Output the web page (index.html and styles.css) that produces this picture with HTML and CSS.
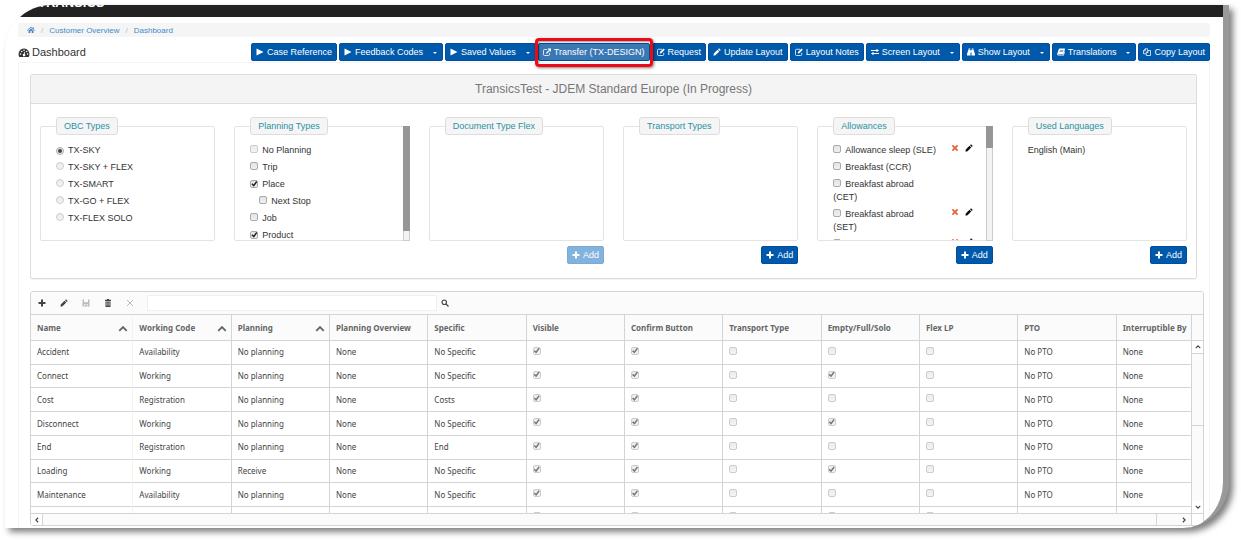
FILE: index.html
```
<!DOCTYPE html>
<html lang="en">
<head>
    <meta charset="UTF-8">
    <meta name="viewport" content="width=device-width, initial-scale=1.0">
    <title>Dashboard</title>
    <link rel="stylesheet" href="styles.css">
</head>
<body>
    <svg class="sprite" aria-hidden="true">
        <symbol id="i-home" viewBox="0 0 16 16"><path d="M8 1.5 0 8.5l1 1.1L8 3.6l7 6 1-1.1-2.5-2.2V2.5h-2v2zM8 5 3 9.3V14h3.6v-4h2.8v4H13V9.3z"/></symbol>
        <symbol id="i-gauge" viewBox="0 0 20 16"><path fill-rule="evenodd" d="M10 1a10 10 0 0 0-8.4 15h16.8A10 10 0 0 0 10 1zM3.8 9.4a1.4 1.4 0 1 1 0 2.8 1.4 1.4 0 0 1 0-2.8zM6 4.7a1.4 1.4 0 1 1 0 2.8 1.4 1.4 0 0 1 0-2.8zM10 2.6a1.4 1.4 0 1 1 0 2.8 1.4 1.4 0 0 1 0-2.8zM14.6 4.7a1.4 1.4 0 1 1 0 2.8 1.4 1.4 0 0 1 0-2.8zM16.4 9.4a1.4 1.4 0 1 1 0 2.8 1.4 1.4 0 0 1 0-2.8zM10.9 6.5l1.2.4-.9 3.8a2.2 2.2 0 1 1-1.4-.3z"/></symbol>
        <symbol id="i-play" viewBox="0 0 16 16"><path d="M1 1v14l14-7z"/></symbol>
        <symbol id="i-external" viewBox="0 0 16 16"><path d="M9 1h7v7l-2.3-2.3-6 6-1.9-1.9 6-6z"/><path d="M8 3H3a2 2 0 0 0-2 2v8a2 2 0 0 0 2 2h8a2 2 0 0 0 2-2v-3" fill="none" stroke="currentColor" stroke-width="1.6"/></symbol>
        <symbol id="i-edit" viewBox="0 0 16 16"><path d="M13 1l2.500 2.500-7 7L5.500 11 6 8z"/><path d="M10 2.500H3a2 2 0 0 0-2 2V13a2 2 0 0 0 2 2h8.500a2 2 0 0 0 2-2V9.500" fill="none" stroke="currentColor" stroke-width="1.600"/></symbol>
        <symbol id="i-pencil" viewBox="0 0 16 16"><path d="M12 .5 15.500 4l-2 2L10 2.500zM9 3.500 12.500 7 5 14.500 1 15.500l.5-4.500z"/></symbol>
        <symbol id="i-exchange" viewBox="0 0 16 16"><path d="M0 4h11V1.500L16 5l-5 3.500V6H0zM16 10v2H5v2.500L0 11l5-3.500V10z"/></symbol>
        <symbol id="i-binoculars" viewBox="0 0 16 16"><path d="M3 1h3.500v2.500H3zM9.500 1H13v2.500H9.500zM2.600 4H7v11H0v-3zM9 4h4.400L16 12v3H9zM7 5h2v4H7z"/></symbol>
        <symbol id="i-book" viewBox="0 0 16 16"><path fill-rule="evenodd" d="M5 1h10a1 1 0 0 1 .9 1.400L13 12H3q-1 .1-.7 1H13l2-6 1 .5-2.300 7.500H2.500Q-.2 14.500.3 12L3.400 2.500Q3.900 1 5 1zM6 4l-.3 1h6.800l.3-1zM5.300 6.500l-.3 1h6.800l.3-1z"/></symbol>
        <symbol id="i-copy" viewBox="0 0 16 16"><path d="M6 11.500H1v-6L4.500 1.500H9V5M4.500 1.500v4H1M15 5v10H6.500V9L10 5zM10 5v4H6.500" fill="none" stroke="currentColor" stroke-width="1.500"/></symbol>
        <symbol id="i-plus" viewBox="0 0 16 16"><path d="M6 1h4v5h5v4h-5v5H6v-5H1V6h5z"/></symbol>
        <symbol id="i-times" viewBox="0 0 16 16"><path d="M4 1.500 8 5.500l4-4L14.500 4l-4 4 4 4-2.500 2.500-4-4-4 4L1.500 12l4-4-4-4z"/></symbol>
        <symbol id="i-cross" viewBox="0 0 16 16"><path d="M2 2l12 12M14 2 2 14" fill="none" stroke="currentColor" stroke-width="2"/></symbol>
        <symbol id="i-save" viewBox="0 0 16 16"><path fill-rule="evenodd" d="M1 1h14v14H1zM4 1v5.500h8V1zM4 10v5h8v-5z"/><path d="M5 11h6v4H5z"/></symbol>
        <symbol id="i-trash" viewBox="0 0 16 16"><path fill-rule="evenodd" d="M6 0h4v1.500h4V4H2V1.500h4zM3 5h10v11H3zM5.200 6.500v7h1v-7zM7.500 6.500v7h1v-7zM9.800 6.500v7h1v-7z"/></symbol>
        <symbol id="i-search" viewBox="0 0 16 16"><path d="M10 10l5 5M11 6.500a4.500 4.500 0 1 1-9 0 4.500 4.500 0 0 1 9 0z" fill="none" stroke="currentColor" stroke-width="2.400"/></symbol>
        <symbol id="i-up" viewBox="0 0 16 16"><path d="M2 11l6-6 6 6" fill="none" stroke="currentColor" stroke-width="3"/></symbol>
    </svg>

    <div class="window">
        <header class="navbar"><span class="brand">TRANSICS</span></header>

        <main class="page">
            <nav class="breadcrumb" aria-label="Breadcrumb">
                <a href="#" aria-label="Home"><svg class="icon"><use href="#i-home"/></svg></a>
                <span class="sep">/</span>
                <a href="#">Customer Overview</a>
                <span class="sep">/</span>
                <a href="#">Dashboard</a>
            </nav>

            <div class="title-row">
                <h1><svg class="icon-gauge"><use href="#i-gauge"/></svg>Dashboard</h1>
                <div class="actions">
                    <button class="btn"><svg class="icon"><use href="#i-play"/></svg>Case Reference</button>
                    <button class="btn"><svg class="icon"><use href="#i-play"/></svg>Feedback Codes<span class="caret"></span></button>
                    <button class="btn"><svg class="icon"><use href="#i-play"/></svg>Saved Values<span class="caret"></span></button>
                    <button class="btn btn-active"><svg class="icon"><use href="#i-external"/></svg>Transfer (TX-DESIGN)</button>
                    <button class="btn"><svg class="icon"><use href="#i-edit"/></svg>Request</button>
                    <button class="btn"><svg class="icon"><use href="#i-pencil"/></svg>Update Layout</button>
                    <button class="btn"><svg class="icon"><use href="#i-edit"/></svg>Layout Notes</button>
                    <button class="btn"><svg class="icon"><use href="#i-exchange"/></svg>Screen Layout<span class="caret"></span></button>
                    <button class="btn"><svg class="icon"><use href="#i-binoculars"/></svg>Show Layout<span class="caret"></span></button>
                    <button class="btn"><svg class="icon"><use href="#i-book"/></svg>Translations<span class="caret"></span></button>
                    <button class="btn"><svg class="icon"><use href="#i-copy"/></svg>Copy Layout</button>
                </div>
            </div>

            <div class="content">
                <section class="panel">
                    <h2>TransicsTest - JDEM Standard Europe (In Progress)</h2>
                    <div class="types">
                        <div class="type">
                            <fieldset>
                                <legend>OBC Types</legend>
                                <ul class="options">
                                    <li><label><input type="radio" name="obc" checked>TX-SKY</label></li>
                                    <li><label><input type="radio" name="obc" disabled>TX-SKY + FLEX</label></li>
                                    <li><label><input type="radio" name="obc" disabled>TX-SMART</label></li>
                                    <li><label><input type="radio" name="obc" disabled>TX-GO + FLEX</label></li>
                                    <li><label><input type="radio" name="obc" disabled>TX-FLEX SOLO</label></li>
                                </ul>
                            </fieldset>
                        </div>
                        <div class="type">
                            <fieldset>
                                <legend>Planning Types</legend>
                                <ul class="options">
                                    <li><label><input type="checkbox" disabled>No Planning</label></li>
                                    <li><label><input type="checkbox">Trip</label></li>
                                    <li><label><input type="checkbox" checked>Place</label></li>
                                    <li class="nested"><label><input type="checkbox">Next Stop</label></li>
                                    <li><label><input type="checkbox">Job</label></li>
                                    <li><label><input type="checkbox" checked>Product</label></li>
                                </ul>
                            </fieldset>
                            <div class="scrollbar"><div class="thumb thumb-long"></div></div>
                        </div>
                        <div class="type">
                            <fieldset>
                                <legend>Document Type Flex</legend>
                            </fieldset>
                            <button class="btn" disabled><svg class="icon"><use href="#i-plus"/></svg>Add</button>
                        </div>
                        <div class="type">
                            <fieldset>
                                <legend>Transport Types</legend>
                            </fieldset>
                            <button class="btn"><svg class="icon"><use href="#i-plus"/></svg>Add</button>
                        </div>
                        <div class="type">
                            <fieldset>
                                <legend>Allowances</legend>
                                <ul class="options">
                                    <li>
                                        <label><input type="checkbox">Allowance sleep (SLE)</label>
                                        <a class="remove" href="#" aria-label="Remove"><svg class="icon"><use href="#i-times"/></svg></a>
                                        <a class="edit" href="#" aria-label="Edit"><svg class="icon"><use href="#i-pencil"/></svg></a>
                                    </li>
                                    <li><label><input type="checkbox">Breakfast (CCR)</label></li>
                                    <li><label><input type="checkbox">Breakfast abroad (CET)</label></li>
                                    <li>
                                        <label><input type="checkbox">Breakfast abroad (SET)</label>
                                        <a class="remove" href="#" aria-label="Remove"><svg class="icon"><use href="#i-times"/></svg></a>
                                        <a class="edit" href="#" aria-label="Edit"><svg class="icon"><use href="#i-pencil"/></svg></a>
                                    </li>
                                    <li>
                                        <label><input type="checkbox">Breakfast abroad</label>
                                        <a class="remove" href="#" aria-label="Remove"><svg class="icon"><use href="#i-times"/></svg></a>
                                        <a class="edit" href="#" aria-label="Edit"><svg class="icon"><use href="#i-pencil"/></svg></a>
                                    </li>
                                </ul>
                            </fieldset>
                            <div class="scrollbar"><div class="thumb thumb-short"></div></div>
                            <button class="btn"><svg class="icon"><use href="#i-plus"/></svg>Add</button>
                        </div>
                        <div class="type">
                            <fieldset>
                                <legend>Used Languages</legend>
                                <ul class="options">
                                    <li>English (Main)</li>
                                </ul>
                            </fieldset>
                            <button class="btn"><svg class="icon"><use href="#i-plus"/></svg>Add</button>
                        </div>
                    </div>
                </section>

                <section class="grid">
                    <div class="toolbar">
                        <button aria-label="Add row"><svg class="icon"><use href="#i-plus"/></svg></button>
                        <button aria-label="Edit row"><svg class="icon"><use href="#i-pencil"/></svg></button>
                        <button aria-label="Save" disabled><svg class="icon"><use href="#i-save"/></svg></button>
                        <button aria-label="Delete"><svg class="icon"><use href="#i-trash"/></svg></button>
                        <button aria-label="Cancel" disabled><svg class="icon"><use href="#i-cross"/></svg></button>
                        <input type="text" aria-label="Search">
                        <button aria-label="Search"><svg class="icon"><use href="#i-search"/></svg></button>
                    </div>
                    <div class="grid-main">
                        <div class="grid-view">
                            <table>
                                <thead>
                                    <tr>
                                        <th class="name">Name<svg class="sort"><use href="#i-up"/></svg></th>
                                        <th>Working Code<svg class="sort"><use href="#i-up"/></svg></th>
                                        <th>Planning<svg class="sort"><use href="#i-up"/></svg></th>
                                        <th>Planning Overview</th>
                                        <th>Specific</th>
                                        <th>Visible</th>
                                        <th>Confirm Button</th>
                                        <th>Transport Type</th>
                                        <th>Empty/Full/Solo</th>
                                        <th>Flex LP</th>
                                        <th>PTO</th>
                                        <th>Interruptible By</th>
                                    </tr>
                                </thead>
                                <tbody>
                                    <tr>
                                        <td>Accident</td><td>Availability</td><td>No planning</td><td>None</td><td>No Specific</td>
                                        <td><input type="checkbox" aria-label="Visible" checked disabled></td>
                                        <td><input type="checkbox" aria-label="Confirm Button" checked disabled></td>
                                        <td><input type="checkbox" aria-label="Transport Type" disabled></td>
                                        <td><input type="checkbox" aria-label="Empty/Full/Solo" disabled></td>
                                        <td><input type="checkbox" aria-label="Flex LP" disabled></td>
                                        <td>No PTO</td><td>None</td>
                                    </tr>
                                    <tr>
                                        <td>Connect</td><td>Working</td><td>No planning</td><td>None</td><td>No Specific</td>
                                        <td><input type="checkbox" aria-label="Visible" checked disabled></td>
                                        <td><input type="checkbox" aria-label="Confirm Button" checked disabled></td>
                                        <td><input type="checkbox" aria-label="Transport Type" disabled></td>
                                        <td><input type="checkbox" aria-label="Empty/Full/Solo" checked disabled></td>
                                        <td><input type="checkbox" aria-label="Flex LP" disabled></td>
                                        <td>No PTO</td><td>None</td>
                                    </tr>
                                    <tr>
                                        <td>Cost</td><td>Registration</td><td>No planning</td><td>None</td><td>Costs</td>
                                        <td><input type="checkbox" aria-label="Visible" checked disabled></td>
                                        <td><input type="checkbox" aria-label="Confirm Button" checked disabled></td>
                                        <td><input type="checkbox" aria-label="Transport Type" disabled></td>
                                        <td><input type="checkbox" aria-label="Empty/Full/Solo" disabled></td>
                                        <td><input type="checkbox" aria-label="Flex LP" disabled></td>
                                        <td>No PTO</td><td>None</td>
                                    </tr>
                                    <tr>
                                        <td>Disconnect</td><td>Working</td><td>No planning</td><td>None</td><td>No Specific</td>
                                        <td><input type="checkbox" aria-label="Visible" checked disabled></td>
                                        <td><input type="checkbox" aria-label="Confirm Button" checked disabled></td>
                                        <td><input type="checkbox" aria-label="Transport Type" disabled></td>
                                        <td><input type="checkbox" aria-label="Empty/Full/Solo" checked disabled></td>
                                        <td><input type="checkbox" aria-label="Flex LP" disabled></td>
                                        <td>No PTO</td><td>None</td>
                                    </tr>
                                    <tr>
                                        <td>End</td><td>Registration</td><td>No planning</td><td>None</td><td>End</td>
                                        <td><input type="checkbox" aria-label="Visible" checked disabled></td>
                                        <td><input type="checkbox" aria-label="Confirm Button" checked disabled></td>
                                        <td><input type="checkbox" aria-label="Transport Type" disabled></td>
                                        <td><input type="checkbox" aria-label="Empty/Full/Solo" disabled></td>
                                        <td><input type="checkbox" aria-label="Flex LP" disabled></td>
                                        <td>No PTO</td><td>None</td>
                                    </tr>
                                    <tr>
                                        <td>Loading</td><td>Working</td><td>Receive</td><td>None</td><td>No Specific</td>
                                        <td><input type="checkbox" aria-label="Visible" checked disabled></td>
                                        <td><input type="checkbox" aria-label="Confirm Button" checked disabled></td>
                                        <td><input type="checkbox" aria-label="Transport Type" disabled></td>
                                        <td><input type="checkbox" aria-label="Empty/Full/Solo" checked disabled></td>
                                        <td><input type="checkbox" aria-label="Flex LP" disabled></td>
                                        <td>No PTO</td><td>None</td>
                                    </tr>
                                    <tr>
                                        <td>Maintenance</td><td>Availability</td><td>No planning</td><td>None</td><td>No Specific</td>
                                        <td><input type="checkbox" aria-label="Visible" checked disabled></td>
                                        <td><input type="checkbox" aria-label="Confirm Button" checked disabled></td>
                                        <td><input type="checkbox" aria-label="Transport Type" disabled></td>
                                        <td><input type="checkbox" aria-label="Empty/Full/Solo" disabled></td>
                                        <td><input type="checkbox" aria-label="Flex LP" disabled></td>
                                        <td>No PTO</td><td>None</td>
                                    </tr>
                                    <tr>
                                        <td></td><td></td><td></td><td></td><td></td>
                                        <td><input type="checkbox" aria-label="Visible" disabled></td>
                                        <td><input type="checkbox" aria-label="Confirm Button" disabled></td>
                                        <td><input type="checkbox" aria-label="Transport Type" disabled></td>
                                        <td><input type="checkbox" aria-label="Empty/Full/Solo" disabled></td>
                                        <td><input type="checkbox" aria-label="Flex LP" disabled></td>
                                        <td></td><td></td>
                                    </tr>
                                </tbody>
                            </table>
                        </div>
                        <div class="vscroll">
                            <div class="corner"></div>
                            <button aria-label="Scroll up"><svg class="arrow"><use href="#i-up"/></svg></button>
                            <div class="track"></div>
                            <button aria-label="Scroll down"><svg class="arrow down"><use href="#i-up"/></svg></button>
                        </div>
                    </div>
                    <div class="hscroll">
                        <button aria-label="Scroll left"><svg class="arrow left"><use href="#i-up"/></svg></button>
                        <div class="track"></div>
                        <button class="next" aria-label="Scroll right"><svg class="arrow right"><use href="#i-up"/></svg></button>
                        <div class="corner"></div>
                    </div>
                </section>
            </div>
        </main>
    </div>
</body>
</html>
```
FILE: styles.css
```
* {
    box-sizing: border-box;
}

body {
    margin: 0;
    padding: 5px 12px 12px 5px;
    background: #fff;
    color: #333;
    font-family: "Liberation Sans", Arial, sans-serif;
    font-size: 9px;
    line-height: 13px;
}

.sprite {
    display: none;
}

svg {
    fill: currentColor;
    flex: none;
}

button,
input {
    font: inherit;
    margin: 0;
}

button {
    cursor: pointer;
}

a {
    color: #428bca;
    text-decoration: none;
}

.icon {
    width: 8px;
    height: 8px;
}

.window {
    overflow: hidden;
    background: #fff;
    border-right: 6px solid #999;
    border-radius: 46px 0 46px 0;
    box-shadow: 4px 4px 6px rgba(0, 0, 0, 0.5);
}

.navbar {
    display: flex;
    align-items: flex-end;
    height: 12px;
    padding: 0 0 1px 33px;
    overflow: hidden;
    background: #222;
    color: #fff;
}

.brand {
    height: 20px;
    font-size: 13px;
    font-weight: bold;
    line-height: 14px;
}

.page {
    padding: 6px 13px 0;
}

.breadcrumb {
    display: flex;
    align-items: center;
    height: 14px;
    padding: 0 9px;
    background: #f5f5f5;
    border-radius: 2px;
    font-size: 8px;
}

.breadcrumb a {
    display: flex;
}

.sep {
    padding: 0 6px;
    color: #bbb;
}

.title-row {
    display: flex;
    justify-content: space-between;
    align-items: center;
    margin-top: 6px;
}

h1 {
    display: flex;
    align-items: center;
    gap: 2px;
    margin: 0;
    font-size: 11px;
    font-weight: normal;
}

.icon-gauge {
    width: 12px;
    height: 9px;
}

.actions {
    display: flex;
    gap: 2px;
}

.btn {
    position: relative;
    display: flex;
    align-items: center;
    gap: 3px;
    height: 18px;
    padding: 0 4px;
    border: 1px solid #004f9c;
    border-radius: 2px;
    background: #0059ab;
    color: #fff;
    white-space: nowrap;
}

.btn:disabled {
    background: #82b2de;
    border-color: #7aaad6;
}

.btn-active {
    background: #3a78b4;
}

/* red marker round the transfer action */
.btn-active::after {
    content: "";
    position: absolute;
    z-index: 1;
    inset: -6px -4px -7px -4px;
    border: 3px solid #ee0a14;
    border-radius: 4px;
    box-shadow: 1px 1px 3px rgba(0, 0, 0, 0.5), inset 1px 1px 2px rgba(0, 0, 0, 0.4);
}

.caret {
    margin: 1px 1px 0 7px;
    border: 2px solid transparent;
    border-top-color: #fff;
    border-bottom: 0;
}

.content {
    margin-top: 1px;
    padding: 11px 0 2px 11px;
    border: 1px solid #f5f5f5;
    border-bottom: 0;
}

.panel {
    margin-right: 12px;
    border: 1px solid #ddd;
    border-radius: 2px;
    box-shadow: 0 1px 1px rgba(0, 0, 0, 0.05);
}

h2 {
    margin: 0;
    padding: 7px 0;
    border-bottom: 1px solid #ddd;
    background: #f4f4f4;
    color: #777;
    font-size: 12px;
    font-weight: normal;
    line-height: 14px;
    text-align: center;
}

.types {
    display: grid;
    grid-template-columns: repeat(6, 1fr);
    gap: 19px;
    padding: 13px 9px 14px;
}

.type {
    position: relative;
    display: flex;
    flex-direction: column;
    align-items: flex-end;
    gap: 5px;
    min-width: 0;
}

fieldset {
    width: 100%;
    height: 124px;
    margin: 0;
    padding: 0 7px 0 15px;
    border: 1px solid #e3e3e3;
    border-radius: 2px;
    overflow: hidden;
}

legend {
    padding: 2px 7px;
    border: 1px solid #ddd;
    border-radius: 3px;
    background: #f5f5f5;
    color: #2a93a3;
    line-height: 12px;
}

.options {
    margin: 0;
    padding: 9px 0 0;
    list-style: none;
}

.options li {
    display: flex;
    margin-bottom: 4px;
}

.options label {
    width: 105px;
}

.options .nested {
    padding-left: 9px;
}

.options input {
    margin: 0 4px 0 0;
}

.remove {
    margin-left: 13px;
    color: #e8623a;
}

.edit {
    margin-left: 6px;
    color: #111;
}

.remove .icon,
.edit .icon {
    display: block;
}

input[type="checkbox"],
input[type="radio"] {
    appearance: none;
    display: inline-grid;
    place-items: center;
    width: 8px;
    height: 8px;
    border: 1px solid #aaa;
    border-radius: 2px;
    background: linear-gradient(#e4e4e4, #f0f0f0);
}

input[type="radio"] {
    border-radius: 50%;
}

input[type="checkbox"]:disabled,
input[type="radio"]:disabled {
    border-color: #ccc;
    background: linear-gradient(#ececec, #f4f4f4);
}

input[type="checkbox"]:checked::before {
    content: "";
    width: 6px;
    height: 6px;
    background: #222;
    clip-path: polygon(0 55%, 20% 38%, 38% 58%, 82% 0, 100% 16%, 42% 96%);
}

input[type="checkbox"]:checked:disabled::before {
    background: #777;
}

input[type="radio"]:checked::before {
    content: "";
    width: 4px;
    height: 4px;
    border-radius: 50%;
    background: #444;
}

.scrollbar {
    position: absolute;
    top: 9px;
    right: 0;
    width: 7px;
    height: 115px;
    border: 1px solid #ccc;
    background: #f3f3f3;
}

.thumb {
    margin: -1px;
    background: #969696;
}

.thumb-long {
    height: 105px;
}

.thumb-short {
    height: 22px;
}

.grid {
    margin: 12px 5px 0 0;
    border: 1px solid #d4d4d4;
    border-radius: 3px;
    overflow: hidden;
    color: #444;
    font-family: "Noto Sans", "Segoe UI", sans-serif;
    font-size: 8px;
    line-height: 12px;
}

.grid button {
    display: flex;
    align-items: center;
    justify-content: center;
    padding: 0;
    border: 0;
    background: none;
    color: #444;
}

.grid button:disabled {
    color: #bbb;
}

.toolbar {
    display: flex;
    align-items: center;
    height: 23px;
    border-bottom: 1px solid #d4d4d4;
    background: #fbfbfb;
}

.toolbar button {
    width: 22px;
}

.toolbar input {
    width: 290px;
    height: 16px;
    margin: 0 0 0 6px;
    border: 1px solid #f0f0f0;
    background: #fff;
}

.toolbar input + button {
    width: 15px;
}

.grid-main {
    display: flex;
    height: 198px;
}

.grid-view {
    flex: 1;
    min-width: 0;
    overflow: hidden;
}

table {
    width: 1184px;
    height: 214px;
    table-layout: fixed;
    border-collapse: separate;
    border-spacing: 0;
}

th,
td {
    width: 98px;
    padding: 0 6px;
    border-right: 1px solid #d4d4d4;
    border-bottom: 1px solid #d4d4d4;
    text-align: left;
    white-space: nowrap;
}

th:first-child,
td:first-child {
    border-right-color: #f3f3f3;
}

th {
    height: 26px;
    background: #fbfbfb;
    color: #666;
}

th.name {
    width: 102px;
}

.sort {
    float: right;
    width: 10px;
    height: 10px;
    margin: 2px -2px 0 0;
}

td input[type="checkbox"] {
    display: grid;
    margin-bottom: 3px;
}

.vscroll {
    display: flex;
    flex-direction: column;
    width: 12px;
    border-left: 1px solid #d4d4d4;
    background: #fbfbfb;
}

.vscroll .corner {
    height: 26px;
    border-bottom: 1px solid #d4d4d4;
}

.vscroll button,
.hscroll button {
    width: 11px;
    height: 12px;
    background: #fff;
}

.arrow {
    width: 6px;
    height: 6px;
}

.down {
    transform: rotate(180deg);
}

.left {
    transform: rotate(-90deg);
}

.right {
    transform: rotate(90deg);
}

.vscroll .track {
    flex: 1;
    border: solid #d4d4d4;
    border-width: 1px 0 0;
    background: linear-gradient(#d4d4d4, #d4d4d4) 0 71px / 100% 1px no-repeat;
}

.hscroll {
    display: flex;
    height: 12px;
    border-top: 1px solid #d4d4d4;
    background: #fbfbfb;
}

.hscroll .track {
    flex: 1;
    border: solid #d4d4d4;
    border-width: 0 1px;
}

.hscroll .next {
    width: 34px;
    padding-left: 20px;
    background: #fbfbfb;
}

.hscroll .corner {
    width: 12px;
    border-left: 1px solid #d4d4d4;
    background: #fff;
}
```
